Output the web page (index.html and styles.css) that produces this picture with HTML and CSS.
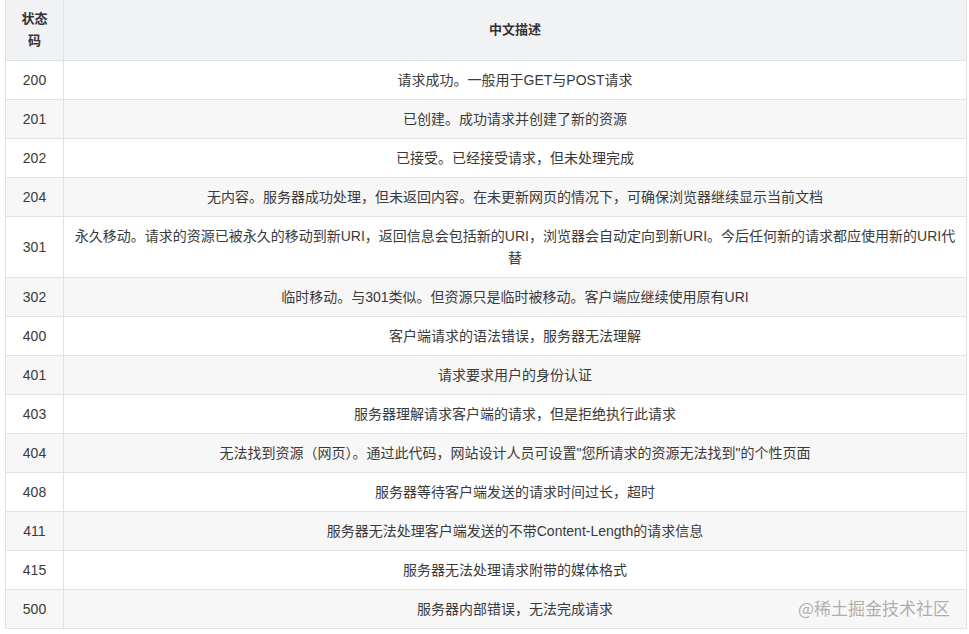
FILE: index.html
```html
<!DOCTYPE html>
<html lang="zh">
<head>
<meta charset="utf-8">
<title>HTTP 状态码</title>
<link rel="stylesheet" href="styles.css">
</head>
<body>
<div class="wrap">
<table class="codes">
<colgroup><col class="c1"><col class="c2"></colgroup>
<thead>
<tr><th>状态码</th><th>中文描述</th></tr>
</thead>
<tbody>
<tr><td>200</td><td>请求成功。一般用于GET与POST请求</td></tr>
<tr><td>201</td><td>已创建。成功请求并创建了新的资源</td></tr>
<tr><td>202</td><td>已接受。已经接受请求，但未处理完成</td></tr>
<tr><td>204</td><td>无内容。服务器成功处理，但未返回内容。在未更新网页的情况下，可确保浏览器继续显示当前文档</td></tr>
<tr><td>301</td><td>永久移动。请求的资源已被永久的移动到新URI，返回信息会包括新的URI，浏览器会自动定向到新URI。今后任何新的请求都应使用新的URI代替</td></tr>
<tr><td>302</td><td>临时移动。与301类似。但资源只是临时被移动。客户端应继续使用原有URI</td></tr>
<tr><td>400</td><td>客户端请求的语法错误，服务器无法理解</td></tr>
<tr><td>401</td><td>请求要求用户的身份认证</td></tr>
<tr><td>403</td><td>服务器理解请求客户端的请求，但是拒绝执行此请求</td></tr>
<tr><td>404</td><td>无法找到资源（网页）。通过此代码，网站设计人员可设置"您所请求的资源无法找到"的个性页面</td></tr>
<tr><td>408</td><td>服务器等待客户端发送的请求时间过长，超时</td></tr>
<tr><td>411</td><td>服务器无法处理客户端发送的不带Content-Length的请求信息</td></tr>
<tr><td>415</td><td>服务器无法处理请求附带的媒体格式</td></tr>
<tr><td>500</td><td>服务器内部错误，无法完成请求</td></tr>
</tbody>
</table>
<div class="mark">@稀土掘金技术社区</div>
</div>
</body>
</html>
```
FILE: styles.css
```css
html, body {
  margin: 0;
  padding: 0;
  background: #ffffff;
}
.wrap {
  position: relative;
  padding: 0 3px 0 5px;
}
.codes {
  width: 962px;
  margin-top: -1px;
  border-collapse: collapse;
  table-layout: fixed;
  font-family: "Liberation Sans", "Noto Sans CJK SC", sans-serif;
  font-size: 14px;
  line-height: 22px;
  color: #3a3a3a;
}
.c1 { width: 58px; }
.codes th,
.codes td {
  border: 1px solid #dfe2e5;
  padding: 8px 10px;
  text-align: center;
  vertical-align: middle;
}
.codes th {
  background: #f0f2f4;
  font-weight: bold;
  font-size: 13px;
  color: #333333;
}
.codes tbody tr:nth-child(even) td {
  background: #f7f7f7;
}
.mark {
  position: absolute;
  right: 19px;
  bottom: 10px;
  font-family: "Noto Sans CJK SC", sans-serif;
  font-size: 17px;
  line-height: 22px;
  color: rgba(150, 150, 150, 0.75);
}
```
